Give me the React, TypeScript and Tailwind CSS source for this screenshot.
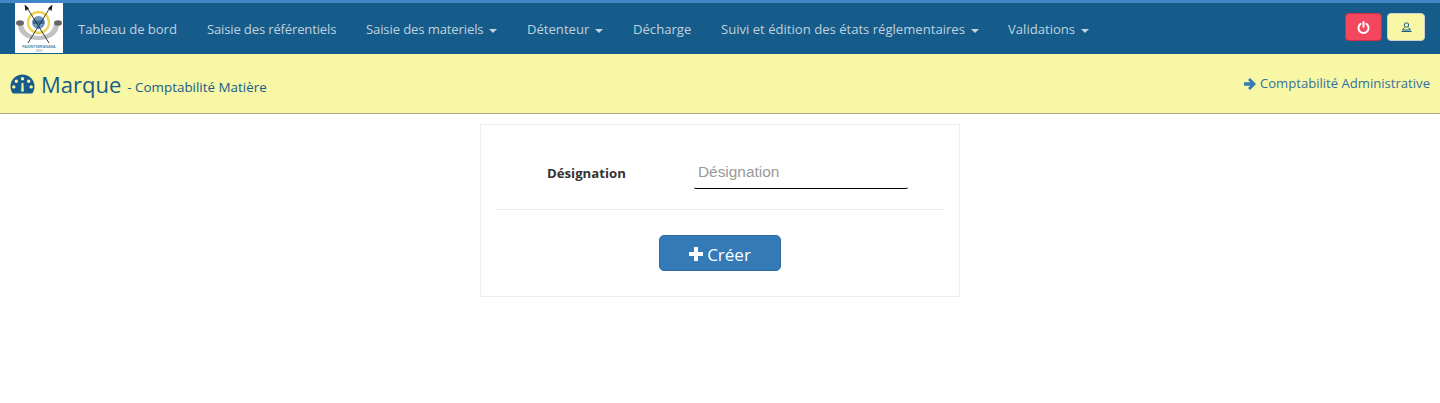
import React from "react";

const font = "font-['Open_Sans','Noto_Sans',sans-serif]";

function Caret() {
  return <span className="ml-[6px] inline-block w-0 h-0 align-middle border-x-[4px] border-x-transparent border-t-[4px] border-t-[#c4d4e0]" />;
}

function Logo() {
  return (
    <div className="w-[48px] h-[50px] bg-white shrink-0">
      <svg width="48" height="50" viewBox="0 0 48 50">
        <path d="M3 21 C3 33 14 37 23.5 37 C33 37 44 33 44 21 L39 21 C38 29 31 33 23.5 33 C16 33 9 29 8 21Z" fill="#c2c2c2" />
        <circle cx="23.5" cy="19.5" r="10.5" fill="none" stroke="#ecd55a" strokeWidth="2.4" />
        <circle cx="23.5" cy="19.5" r="6.5" fill="#6f97bb" />
        <path d="M18 17.5h11v3.5h-11z" fill="#3a6c98" />
        <path d="M11 3 L34 40 M36 3 L13 40" stroke="#2a2a2a" strokeWidth="0.9" />
        <path d="M9.5 1.5 L10.5 8 L14 5.5Z M37.5 1.5 L36.5 8 L33 5.5Z" fill="#1d1d1d" />
        <ellipse cx="5" cy="20" rx="4" ry="2.8" fill="#666" />
        <ellipse cx="43" cy="20" rx="4" ry="2.8" fill="#666" />
        <text x="24" y="44.5" textAnchor="middle" fontSize="3.6" fontWeight="700" fill="#4f8bb3" fontFamily="Liberation Sans, sans-serif">FADINTSERANANA</text>
        <text x="24" y="49" textAnchor="middle" fontSize="3.2" fill="#888" fontFamily="Liberation Sans, sans-serif">1820</text>
      </svg>
    </div>
  );
}

function Gauge() {
  return (
    <svg width="25" height="20" viewBox="0 0 25 20" className="shrink-0">
      <path fillRule="evenodd" fill="#155c8b" d="M12.5 0.5C5.8 0.5 0.5 5.8 0.5 12.5c0 2.3 0.6 4.4 1.7 6.2 0.3 0.5 0.7 0.8 1.2 0.8h18.2c0.5 0 0.9-0.3 1.2-0.8 1.1-1.8 1.7-3.9 1.7-6.2C24.5 5.8 19.2 0.5 12.5 0.5ZM12.5 3a1.7 1.7 0 1 1 0 3.4 1.7 1.7 0 0 1 0-3.4ZM6.3 5.5a1.7 1.7 0 1 1 0 3.4 1.7 1.7 0 0 1 0-3.4ZM18.7 5.5a1.7 1.7 0 1 1 0 3.4 1.7 1.7 0 0 1 0-3.4ZM3.8 11.2a1.7 1.7 0 1 1 0 3.4 1.7 1.7 0 0 1 0-3.4ZM21.2 11.2a1.7 1.7 0 1 1 0 3.4 1.7 1.7 0 0 1 0-3.4ZM11.2 17.5 11.6 9h1.8l0.4 8.5Z" />
    </svg>
  );
}

const items: [string, boolean, string][] = [
  ["Tableau de bord", false, "w-[129px] tracking-[-0.07px]"],
  ["Saisie des référentiels", false, "w-[159px] tracking-[-0.17px]"],
  ["Saisie des materiels", true, "w-[161px] tracking-[-0.13px]"],
  ["Détenteur", true, "w-[106px]"],
  ["Décharge", false, "w-[88px]"],
  ["Suivi et édition des états réglementaires", true, "w-[287px]"],
  ["Validations", true, "w-[110px]"],
];

export default function App() {
  return (
    <div className={`min-h-[403px] bg-white ${font}`}>
      <nav className="h-[54px] bg-[#155c8b] border-t-[3px] border-t-[#3f87c6] flex items-start pl-[15px] pr-[15px]">
        <Logo />
        <ul className="flex pl-[15px] h-[51px] items-center pt-[3px]">
          {items.map(([t, c, w]) => (
            <li key={t} className={`${w} shrink-0 text-[13.1px] text-[#c0d1de] whitespace-nowrap`}>
              {t}
              {c && <Caret />}
            </li>
          ))}
        </ul>
        <div className="ml-auto flex gap-[5px] mt-[10px]">
          <button className="w-[37px] h-[28px] rounded-[4px] bg-[#f2475f] border border-[#d52b47] flex items-center justify-center">
            <svg width="13" height="13" viewBox="0 0 13 13" fill="none" stroke="#fff" strokeWidth="2" strokeLinecap="round">
              <path d="M6.5 1v5" />
              <path d="M3.6 2.9a5 5 0 1 0 5.8 0" />
            </svg>
          </button>
          <button className="w-[38px] h-[28px] rounded-[4px] bg-[#f8f7a5] border border-[#cfcfcf] flex items-center justify-center">
            <svg width="11" height="10" viewBox="0 0 11 10" fill="none" stroke="#155c8b" strokeWidth="1">
              <circle cx="5.5" cy="3" r="2.2" />
              <path d="M3.5 5.5 1.5 8H9.5L7.5 5.5" />
              <path d="M0.5 9.5h10" />
            </svg>
          </button>
        </div>
      </nav>

      <header className="h-[60px] bg-[#f8f7a5] border-b border-b-[#aaa98a] flex items-center justify-between pl-[10px] pr-[10px]">
        <div className="flex items-center">
          <Gauge />
          <span className="ml-[6px] text-[22px] leading-none text-[#155c8b]">Marque</span>
          <span className="ml-[6px] mt-[9px] text-[13.4px] leading-none text-[#155c8b]">- Comptabilité Matière</span>
        </div>
        <div className="flex items-center gap-[4px] mt-[1px] text-[13.1px]">
          <svg width="12" height="12" viewBox="0 0 12 12">
            <path fill="#337ab7" d="M6 0 12 6 6 12 4 10l2.4-2.2H0V4.2h6.4L4 2Z" />
          </svg>
          <span className="text-[#33709f]">Comptabilité Administrative</span>
        </div>
      </header>

      <main className="flex justify-center pt-[10px]">
        <div className="w-[480px] h-[173px] border border-[#eeeeee] px-[15px]">
          <div className="h-[85px] flex items-start border-b border-b-[#eeeeee]">
            <div className="w-[198px] pt-[39px] pl-[51px] text-[13.2px] leading-[18px] font-bold text-[#333] whitespace-nowrap">
              Désignation
            </div>
            <input
              placeholder="Désignation"
              className="mt-[29px] w-[214px] h-[35px] px-[4px] pt-[1px] border-b border-b-black rounded-b-[2px] font-['Liberation_Sans',sans-serif] text-[15.4px] placeholder:text-[#999] outline-none bg-transparent"
            />
          </div>
          <div className="flex justify-center pt-[25px]">
            <button className="w-[122px] h-[36px] pt-[4px] rounded-[5px] bg-[#337ab7] border border-[#2e6da4] text-white text-[17px] flex items-center justify-center gap-[4px]">
              <svg width="14" height="14" viewBox="0 0 14 14" className="-mt-[2px]"><path fill="#fff" d="M5 0h4v5h5v4H9v5H5V9H0V5h5Z" /></svg>
              Créer
            </button>
          </div>
        </div>
      </main>
    </div>
  );
}
